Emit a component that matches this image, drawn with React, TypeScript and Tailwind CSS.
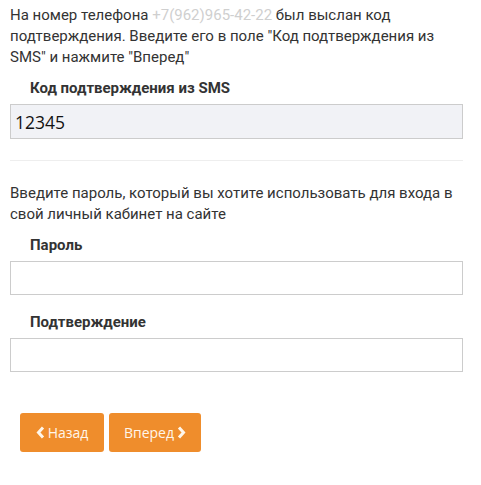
const Field = ({ label, value, filled }: { label: string; value?: string; filled?: boolean }) => {
  return (
    <div className="flex flex-col">
      <label className="pl-[20px] text-[15px] leading-[20px] font-bold text-[#333]">{label}</label>
      <input
        readOnly
        value={value ?? ""}
        className={
          filled
            ? "mt-[6px] h-[35px] w-full border border-[#cccccc] bg-[#f1f2f6] px-[4px] text-[17.5px] text-[#111] outline-none [font-family:'Open_Sans',sans-serif]"
            : "mt-[6px] h-[34px] w-full border border-[#cccccc] bg-white px-[4px] text-[17px] outline-none"
        }
      />
    </div>
  );
};

// thick chevron like the font-awesome one on the site
const Chevron = ({ dir }: { dir: "left" | "right" }) => (
  <svg width="9" height="13" viewBox="0 0 9 13" fill="none">
    <path
      d={dir === "left" ? "M7 1.5 L2.5 6.5 L7 11.5" : "M2 1.5 L6.5 6.5 L2 11.5"}
      stroke="currentColor"
      strokeWidth="3"
      strokeLinejoin="miter"
    />
  </svg>
);

export default function App() {
  return (
    <div className="min-h-[485px] w-[481px] bg-white [font-family:Roboto,'Liberation_Sans',sans-serif]">
      <div className="ml-[10px] w-[453px] pt-[5px]">
        {/* sms sent */}
        <p className="text-[15px] leading-[21px] text-[#333]">
          На номер телефона <span className="text-[#cfcfcf]">+7(962)965-42-22</span> был выслан код
          подтверждения. Введите его в поле "Код подтверждения из SMS" и нажмите "Вперед"
        </p>

        <div className="mt-[10px]">
          <Field label="Код подтверждения из SMS" value="12345" filled />
        </div>

        <hr className="mt-[21px] border-t border-[#eeeeee]" />

        {/* password */}
        <p className="mt-[22px] text-[15px] leading-[21px] text-[#333]">
          Введите пароль, который вы хотите использовать для входа в свой личный кабинет на сайте
        </p>

        <div className="mt-[10px] flex flex-col gap-[17px]">
          <Field label="Пароль" />
          <Field label="Подтверждение" />
        </div>

        {/* buttons */}
        <div className="mt-[41px] flex flex-row gap-[5px] pl-[10px] [font-family:'Open_Sans',sans-serif]">
          <button className="flex h-[39px] w-[84px] items-center justify-center gap-[3px] rounded-[3px] bg-[#ef8d2c] text-[14px] text-[#fff6ea]">
            <Chevron dir="left" /> Назад
          </button>
          <button className="flex h-[39px] w-[92px] items-center justify-center gap-[3px] rounded-[3px] bg-[#ef8d2c] text-[14px] text-[#fff6ea]">
            Вперед <Chevron dir="right" />
          </button>
        </div>
      </div>
    </div>
  );
}
